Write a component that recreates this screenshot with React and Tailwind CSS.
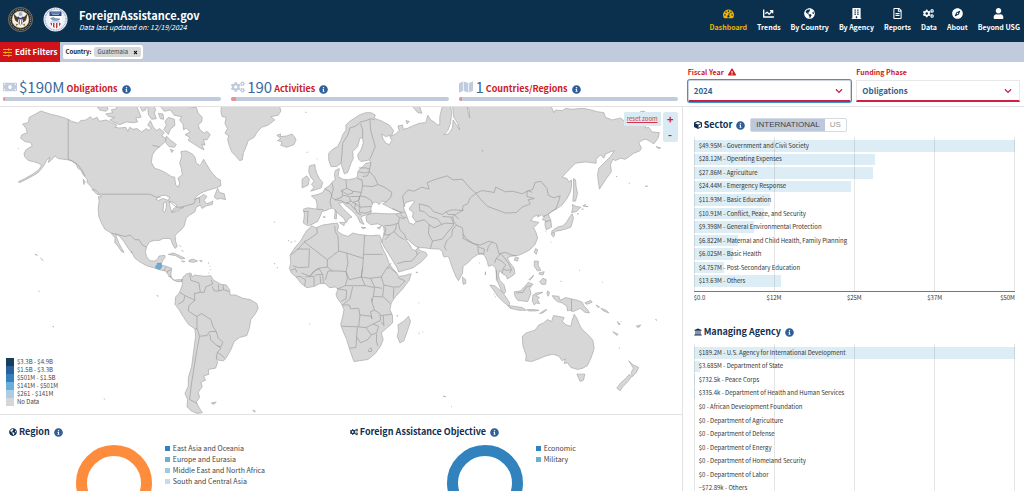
import React from "react";
import {
  FaChartLine, FaGlobeAmericas, FaBuilding, FaRegFileAlt, FaCogs, FaCompass, FaUser,
  FaInfoCircle, FaMoneyBill, FaMap, FaCube, FaUniversity, FaExclamationTriangle, FaTimes, FaChevronDown,
} from "react-icons/fa";

function GaugeIcon({ className }) {
  return (
    <svg viewBox="0 0 28 28" className={className} fill="currentColor" aria-hidden="true">
      <path d="M14 4a14 14 0 0 0-12 21q.4 1 1.500 1h21q1 0 1.500-1A14 14 0 0 0 14 4z" />
      <g fill="#0b304e">
        <circle cx="5" cy="18" r="2" />
        <circle cx="7.500" cy="11" r="2" />
        <circle cx="14" cy="8" r="2" />
        <circle cx="20.500" cy="11" r="2" />
        <circle cx="23" cy="18" r="2" />
        <path d="M15 12l2 .500-1.500 6.500a3 3 0 1 1-2-.500z" />
      </g>
    </svg>
  );
}

const NAV = [
  ["Dashboard", GaugeIcon], ["Trends", FaChartLine], ["By Country", FaGlobeAmericas], ["By Agency", FaBuilding],
  ["Reports", FaRegFileAlt], ["Data", FaCogs], ["About", FaCompass], ["Beyond USG", FaUser],
];

const STATS = [
  { icon: FaMoneyBill, value: "$190M", label: "Obligations", share: 1 },
  { icon: FaCogs, value: "190", label: "Activities", share: 2 },
  { icon: FaMap, value: "1", label: "Countries/Regions", share: 1 },
];

const SECTORS = [
  ["$49.95M", "Government and Civil Society", 100], ["$28.12M", "Operating Expenses", 56.3],
  ["$27.86M", "Agriculture", 55.8], ["$24.44M", "Emergency Response", 48.9], ["$11.93M", "Basic Education", 23.9],
  ["$10.91M", "Conflict, Peace, and Security", 21.8], ["$9.398M", "General Environmental Protection", 18.8],
  ["$6.822M", "Maternal and Child Health, Family Planning", 13.7], ["$6.025M", "Basic Health", 12.1],
  ["$4.757M", "Post-Secondary Education", 9.5], ["$13.63M", "Others", 27.3],
];

const AGENCIES = [
  ["$189.2M", "U.S. Agency for International Development", 100], ["$3.685M", "Department of State", 1.95],
  ["$732.5k", "Peace Corps", 0.4], ["$335.4k", "Department of Health and Human Services", 0.2],
  ["$0", "African Development Foundation", 0], ["$0", "Department of Agriculture", 0],
  ["$0", "Department of Defense", 0], ["$0", "Department of Energy", 0], ["$0", "Department of Homeland Security", 0],
  ["$0", "Department of Labor", 0], ["−$72.89k", "Others", 0],
];

const LEGEND = [
  ["bg-[#143d5e]", "$3.3B - $4.9B"], ["bg-[#2a5f9e]", "$1.5B - $3.3B"], ["bg-[#3182bd]", "$501M - $1.5B"],
  ["bg-[#6baed6]", "$141M - $501M"], ["bg-[#abcde6]", "$261 - $141M"], ["bg-[#d6d6d6]", "No Data"],
];

/* ---- World map. Every outline is a list of [dx, dy, points] sections, joined in order. ---- */
const A = [0, 300], B = [600, 300], C = [1320, 300], D = [0, 750], E = [810, 600], F = [1320, 750];

function trace(sections, closed) {
  const pts = sections.flatMap(([[dx, dy], list]) =>
    list.trim().split(/\s+/).map((p) => {
      const [x, y] = p.split(",").map(Number);
      return `${x + dx} ${y + dy}`;
    })
  );
  return "M" + pts.join("L") + (closed ? "Z" : "");
}

const LAND = [
  // North and Central America
  [[A, "68,72 85,68 88,52 105,43 123,33 150,42 175,48 195,54 205,58 215,64 235,70 242,62 258,60 272,50 278,58 292,52 298,64 320,60 335,68 352,76 345,82 360,84 378,82 384,94 390,82 400,88 412,86 425,96 440,86 448,92 455,84 444,76 452,62 460,80 470,92 480,86 494,98 486,108 500,116 494,128 478,142 468,150 458,165 455,188 465,205 485,212 500,220 515,230 525,232 528,255 536,262 540,250 535,235 548,225 545,205 540,190 546,170 544,155 560,153 578,162 586,172 590,190 600,196 606,190 612,178 622,195 632,212 640,222 652,235 662,240 664,258 650,264 630,270 612,276 600,282 590,290 584,300 600,292 612,284 622,290 613,302 622,312 640,304 638,314 620,318 608,326 602,316 590,322 586,336 570,346 560,355 556,370 553,380 545,390 535,398 526,408 528,425 533,440 526,446 518,432 514,418 505,416 490,416 480,422 465,422 450,426 441,440"],
    [D, "437,5 440,20 450,33 465,34 474,28 478,19 495,17 496,23 488,34 484,46 500,50 516,56 514,70 514,82 522,92 534,90 548,90 545,96 532,96 518,88 508,78 498,64 480,60 462,54 440,48 418,35 405,25 395,5"],
    [A, "396,460 385,445 372,425 360,410 348,402 350,412 358,432 366,446 373,458 366,456 355,440 345,428 346,415 334,400 315,388 305,370 297,350 295,325 298,305 296,290 305,292 300,285 285,272 275,262 262,248 262,238 250,225 244,212 234,205 228,192 215,183 205,180 190,178 175,176 165,168 155,180 145,188 150,172 140,182 130,200 115,218 90,233 60,248 55,246 75,236 100,222 118,208 125,196 115,190 100,185 85,182 75,172 72,160 80,148 97,138 92,128 75,125 62,115 65,105 82,98 78,85"]],
  // Arctic archipelago
  [[A, "292,20 300,30 318,34 325,28 322,20"]],
  [[A, "318,42 340,38 334,30 350,26 352,18 410,18 418,35 424,52 408,54 414,66 398,68 380,66 360,74 340,66 330,60 345,52 326,50"]],
  [[A, "420,18 440,18 438,30 428,34"]],
  [[A, "444,20 462,18 468,28 464,40 470,56 456,58 446,44"]],
  [[A, "478,15 560,15 570,24 590,22 596,40 608,52 606,66 596,74 600,88 614,100 622,94 632,104 622,120 612,118 616,136 606,132 613,150 598,142 580,130 566,122 570,112 556,104 572,96 560,84 552,90 550,72 540,60 546,50 524,46 512,30 494,34"]],
  [[A, "476,40 490,42 492,58 482,56"]],
  [[A, "506,52 524,58 526,76 512,88 506,104 492,88 500,76 496,64"]],
  [[A, "500,108 512,120 530,134 524,142 508,140 498,128"]],
  [[A, "512,148 522,152 516,158"]],
  [[A, "644,292 650,276 654,265 660,278 674,282 678,300 664,296 652,298"]],
  [[A, "250,238 256,246 252,254"]],
  [[A, "276,268 290,272 300,284 292,284"]],
  // Greenland, Iceland, Svalbard
  [[B, "66,15 240,15 244,34 236,46 214,50 226,60 205,76 186,82 172,98 164,112 146,122 140,140 132,158 128,180 120,182 110,170 98,158 90,140 84,118 88,108 76,100 84,86 76,70 80,52 68,50 64,36"]],
  [[B, "232,106 244,102 242,110 262,108 278,102 290,118 284,134 262,142 244,136 248,126 234,122 244,116"]],
  // Caribbean
  [[D, "506,14 522,10 540,18 556,26 546,28 528,18"]],
  [[D, "568,32 580,28 594,34 582,38 568,36"]], [[D, "546,34 556,35 550,37"]], [[D, "600,33 608,33 606,36"]],
  // South America
  [[D, "548,88 552,80 562,72 574,70 578,82 584,76 600,78 616,80 634,78 640,90 650,96 664,104 680,106 690,120 692,136 708,136 730,146 752,150 772,162 776,176 768,192 754,210 750,234 742,258 720,264 704,276 694,300 682,322 672,334 656,332 650,322 654,340 648,356 626,360 628,374 612,380 618,392 604,398 608,412 596,428 600,444 590,458 596,470 604,484 608,490 592,492 574,484 562,472 564,450 556,432 566,410 566,384 576,352 582,306 588,260 586,238 566,224 550,200 538,180 526,164 528,142 540,128 548,106"]],
  [[D, "636,460 650,458 644,464 638,464"]], [[D, "760,482 768,486 764,488"]],
  // Eurasia
  [[B, "440,75 450,65 465,55 480,45 500,38 515,38 528,45 525,55 545,62 570,75 583,92 578,105 560,110 546,102 552,118 560,130 570,134 578,122 572,110 590,102 600,92 596,78 610,75 612,88 625,85 640,78 660,70 680,68 686,46 695,60 705,66 714,74 722,75 722,50 728,25 734,15"],
    [C, "335,15 345,38 350,30 370,32 380,25 400,28 430,25 450,28 475,35 495,38 500,52 520,60 545,54 560,66 580,60 600,72 606,34 618,34 620,84 630,82 640,96 662,98 658,115 645,132 635,125 622,118 612,120 600,128 608,145 603,153 585,160 560,178 545,175 530,182 522,178 515,195 518,215 500,240 482,268 480,255 476,225 480,205 495,190 515,170 527,152 515,156 500,162 495,175 485,165 472,178 472,190 455,188 440,186 410,190 395,205 380,220 370,232 384,236 390,246 398,240 398,258 395,275 385,295 370,315 352,328 338,334 328,345 336,362 338,382 322,390 318,375 320,362 310,360 318,350 308,345 296,352 300,345 285,350 275,362 290,366 300,368 284,384 292,400 296,415 288,435 270,452 250,462 235,468"],
    [F, "232,18 215,20 205,25 212,38 225,55 228,72 218,80 205,88 202,78 190,72 183,62 178,75 182,92 195,105 200,125 196,132 186,120 180,105 172,90 172,75 170,55 160,46 148,50 145,35 138,20 130,12 115,15 100,25 88,38 72,50 70,72 58,93 50,80 38,50 30,25 25,20 15,22"],
    [E, "522,168 520,155 510,148 485,147 465,144 452,144 440,140 425,128 415,118 412,122 422,136 430,150 440,152 447,142 450,152 470,158 474,168 455,188 430,205 405,212 388,217 384,205 372,185 360,165 345,142 338,128 342,110 345,95 343,80 325,72 305,75 292,65"],
    [B, "500,352 506,344 525,340 560,342 590,342 608,340 585,330 565,320 550,312 562,306 548,304 540,314 530,306 520,310 515,325 516,340 500,346 490,348 485,355 494,374 482,368 475,352 465,340 455,330 440,318 430,308 418,310 430,325 445,340 458,352 448,356 440,370 434,356 415,340 402,326 395,325 380,332 368,335 362,350 355,365 335,375 325,378 312,370 315,345 312,328 325,324 352,328 353,315 350,300 336,288 355,284 370,278 378,265 390,258 400,245 408,240 405,225 408,212 420,206 416,230 430,238 445,240 465,236 474,232 476,214 490,200 500,190 515,188 510,180 485,185 478,178 475,165 485,150 492,130 490,115 482,114 475,140 460,155 462,175 455,190 450,205 445,218 435,222 428,200 425,190 412,200 395,200 388,180 388,160 400,148 415,140 425,120 430,105 440,90"]],
  // Europe: islands
  [[B, "330,198 346,194 348,206 352,220 360,236 370,248 366,264 348,270 334,274 344,262 336,254 344,244 334,232 328,216"]],
  [[B, "308,238 322,228 330,238 326,256 308,264"]],
  [[B, "408,330 412,338 411,358 405,356"]], [[B, "420,368 436,368 434,378"]], [[B, "486,382 500,384 490,387"]], [[B, "534,384 546,380 540,388"]],
  [[B, "636,15 660,15 668,40 656,38"]], [[B, "620,62 630,64 624,72"]], [[B, "372,350 378,352 374,354"]],
  // Africa
  [[E, "126,78 140,84 160,76 185,72 204,70 208,80 204,94 218,104 236,110 250,100 268,104 286,106 304,108 326,106 332,108 338,124 334,132 342,150 352,170 360,192 370,206 384,222 388,230 404,228 426,222 420,242 400,268 378,292 366,310 362,330 370,348 370,370 352,386 336,400 342,420 334,440 318,462 296,480 270,484 254,486 248,470 240,446 232,420 220,392 214,374 220,352 224,330 216,312 204,296 200,284 206,268 198,262 180,264 168,252 150,252 136,260 112,264 96,252 80,232 66,220 60,206 64,190 62,166 76,144 92,126 100,112 112,92 122,84"]],
  [[E, "386,376 402,366 418,350 424,366 414,396 404,424 392,430 384,410 388,394"]],
  // Asia and Oceania: islands
  [[E, "580,232 590,240 590,252 582,254"]],
  [[C, "404,236 410,240 412,262 416,280 410,304 402,304 404,280"]],
  [[C, "398,338 402,324 400,314 412,320 426,322 412,336"]],
  [[C, "400,342 404,356 396,382 380,388 364,392 352,394 344,400 338,394 356,382 372,378 384,366 392,352"]],
  [[C, "338,398 348,402 344,412 338,406"]], [[C, "290,446 296,450 292,464 286,458"]],
  [[C, "432,318 440,314 438,320"]], [[C, "652,140 666,144 660,146"]],
  [[F, "228,24 238,24 236,34 226,32"]],
  [[F, "286,34 298,34 298,48 306,62 296,64 286,50"]], [[F, "300,70 316,66 312,76 302,74"]],
  [[F, "302,96 312,86 322,90 320,104 308,104"]], [[F, "270,90 284,76 280,84 272,92"]],
  [[F, "152,106 166,108 186,124 202,144 212,160 210,170 194,158 176,140 164,122"]],
  [[F, "206,168 226,170 250,174 262,182 240,182 214,176"]],
  [[F, "226,126 244,124 258,110 268,98 282,104 272,116 276,132 266,156 236,152 228,140"]],
  [[F, "282,136 292,130 312,128 290,138 302,144 296,150 302,162 292,160 286,166 280,154"]],
  [[F, "264,180 280,180 300,182 290,184 268,184"]], [[F, "302,192 316,182 324,180 312,190"]], [[F, "326,124 332,128 328,140 324,132"]],
  [[F, "340,138 360,140 364,152 380,144 398,148 416,152 430,158 436,170 446,180 452,190 438,188 424,176 412,182 402,186 392,182 386,184 384,170 370,160 356,156 346,148"]],
  [[F, "438,160 456,152 460,158 444,164"]], [[F, "472,166 482,172 478,174"]], [[F, "486,176 502,182 510,190 494,184"]],
  [[F, "536,216 544,224 540,226"]], [[F, "522,246 538,254 534,258"]], [[F, "592,230 606,226 600,234"]],
  [[F, "250,260 262,250 288,242 300,226 314,220 326,210 338,216 344,198 358,200 376,204 370,216 382,226 396,230 400,212 406,194 414,206 422,226 430,240 446,254 462,272 466,296 458,322 446,348 432,356 416,360 396,354 386,340 376,342 380,328 370,334 360,320 342,314 318,320 300,328 278,336 260,334 262,318 252,290"]],
  [[F, "414,374 438,374 434,392 424,396"]],
  [[F, "570,334 580,344 600,354 592,370 580,382 578,368 584,356"]],
  [[F, "572,374 578,382 566,398 552,412 544,424 534,416 546,400 562,386"]],
];

const WATER = [
  [[B, "620,308 640,302 646,306 636,318 630,328 642,338 640,352 650,366 644,374 630,370 624,352 618,336 612,322"]],
  [[C, "34,15 38,40 34,70 26,92 14,104 28,102 40,84 42,60 52,74 62,90 56,70 44,52 40,15"]],
  [[C, "84,20 88,40 92,54 90,30"]],
  [[A, "468,298 482,288 496,286 510,292 506,302 490,296 476,302"]],
  [[A, "492,310 500,306 500,322 496,338 490,334"]],
  [[A, "508,304 520,308 528,312 532,322 522,326 516,336 512,324"]],
  [[A, "516,338 530,330 552,322 540,330 526,336"]],
];

const BORDERS = [
  [[A, "205,58 205,178 218,184 232,192 246,210 256,228"]],
  [[A, "302,283 450,283 470,292 484,292"]], [[A, "508,304 530,322 545,322 566,316 582,312 590,296 600,294 600,310"]],
  [[A, "334,400 352,404 376,410 392,406 406,420 418,420 428,436 440,442"]], [[A, "458,136 480,141"]],
  [[D, "484,48 480,60"]], [[D, "500,52 492,64"]], [[D, "516,58 500,68"]], [[D, "548,88 545,96"]], [[D, "506,80 516,82"]],
  [[D, "570,74 574,92 598,100 602,128 614,128 618,112 640,102 634,90"]],
  [[D, "540,128 556,138 552,154 536,164"]], [[D, "556,138 586,152 584,132 602,128"]],
  [[D, "586,152 568,168 566,184 584,196 592,200 606,192 634,210 640,230 650,246 656,266 670,278 664,292 652,288"]],
  [[D, "592,200 592,236 586,240"]], [[D, "592,236 600,260 622,258 630,246 650,246"]],
  [[D, "630,254 634,272 652,288 664,296 654,308 676,326"]], [[D, "654,308 650,324"]],
  [[D, "600,260 592,300 584,350 576,400 570,450 592,462"]], [[D, "638,110 644,124 658,124 656,104"]], [[D, "658,124 672,120 670,106"]], [[D, "672,120 690,126"]],
  [[B, "425,190 428,160 430,130 446,104 452,84 470,78 484,66 500,62 516,56 526,60"]],
  [[B, "484,70 490,90 490,114"]], [[B, "512,58 514,90 528,140 512,178"]],
  [[B, "515,188 510,214 498,220 478,216"]], [[B, "478,204 500,204 512,208"]], [[B, "510,214 526,232 536,254 520,260 490,258 488,240 474,236"]],
  [[B, "490,230 504,228 510,216"]], [[B, "440,240 442,266 460,274 486,278 490,258"]],
  [[B, "536,254 556,262 578,278 574,294 562,304"]], [[B, "486,278 482,288 500,292 516,302 520,312"]],
  [[B, "398,250 402,268 396,290 406,300 428,292 430,282 426,272 442,266"]], [[B, "376,266 392,276 398,288"]], [[B, "396,290 392,306 396,322"]],
  [[B, "406,300 424,302 440,310 454,304 450,290 430,286"]], [[B, "426,272 444,284 460,280 460,274"]],
  [[B, "454,290 482,290 478,302 460,308 452,300"]], [[B, "440,310 452,312 468,330"]], [[B, "460,308 474,316 482,322 516,320"]],
  [[B, "482,322 480,338 500,340 516,334"]], [[B, "470,310 466,322 474,340 486,346"]], [[B, "482,288 478,302 482,322"]],
  [[B, "352,328 372,330"]], [[B, "326,336 324,372"]], [[B, "312,336 328,334"]],
  [[B, "580,326 600,336 616,338"]], [[B, "590,342 598,352 616,358"]], [[B, "604,344 612,352 622,354"]],
  [[B, "556,378 578,376 598,370 600,356"]], [[B, "554,380 560,386 556,406 572,404 588,392 592,374"]],
  [[B, "572,404 558,420"]], [[B, "598,370 602,390 616,404 622,420"]], [[B, "584,396 602,412 616,420"]],
  [[B, "616,322 610,290 626,270 644,274 668,262 690,268 684,248 710,238 744,228 762,240 790,238"], [C, "90,262 110,280"]],
  [[C, "110,280 130,272 166,278 170,262 200,276 220,274 250,282 268,272 280,278"]],
  [[C, "110,280 126,300 146,320 200,340 232,338 250,322 274,312 268,300 286,296 264,290 264,276 282,268 288,248 306,244 324,266 328,286 344,294 364,288 358,308 350,328 326,344 310,352"]],
  [[C, "110,280 92,296 86,312 72,318 70,332 40,350 44,366 52,376 70,384 72,402 80,416 104,432 124,436 150,424 172,432 180,462 200,458 216,466 232,468"]],
  [[B, "662,332 660,312 690,320 704,336 730,344 740,336 760,330 794,332"]],
  [[B, "650,366 676,360 690,374 704,384 728,374 716,358 690,350 676,336 660,332"]],
  [[B, "728,374 740,370 764,372 756,352 730,350"]], [[B, "740,336 748,344 764,344 780,358"]], [[B, "690,374 688,402 700,424 694,446"]],
  [[B, "700,424 730,418 742,402 760,380 764,372"]], [[C, "52,376 40,390 38,408 22,424 16,442 22,452"]],
  [[C, "72,402 72,416 90,426 118,438"]], [[C, "116,438 118,460 134,464 136,448 118,442"]], [[C, "144,456 148,440 160,426"]],
  [[F, "166,40 172,26 184,12"]], [[F, "184,12 196,24 208,40 218,60 212,70"]], [[F, "172,26 190,36 200,46 192,58 204,62 216,60"]], [[F, "192,58 190,70"]], [[F, "172,62 174,90"]],
  [[C, "318,366 334,362"]], [[F, "398,148 398,184"]], [[F, "232,130 252,128 262,112 276,108"]],
  [[E, "384,192 404,186 428,184 440,170 450,158"]], [[E, "440,152 444,164"]],
  [[E, "142,84 144,100 120,118 104,126"]], [[E, "106,126 86,148 64,166"]], [[E, "104,126 174,180 208,154 206,110 198,96 196,78"]],
  [[E, "120,146 118,202 88,204 70,198"]], [[E, "84,148 118,148"]], [[E, "174,180 174,202 146,206 130,218 122,230 96,220"]], [[E, "208,154 232,160 282,176 286,106"]],
  [[E, "284,164 340,164"]], [[E, "232,160 236,190 230,216 214,214 176,214 168,240"]], [[E, "174,202 190,214"]], [[E, "282,176 280,204 276,232 240,240 230,216"]],
  [[E, "280,204 276,232 300,236 336,232 352,206 366,190"]], [[E, "352,206 362,204 384,222"]], [[E, "336,232 344,256 370,262 390,262 408,244 386,234"]],
  [[E, "344,256 340,290 364,312"]], [[E, "374,264 372,296"]], [[E, "304,236 316,262 338,266"]], [[E, "276,232 288,258 316,264 312,290 340,292"]],
  [[E, "204,268 228,258 288,258"]], [[E, "230,216 234,236 228,258"]], [[E, "206,268 232,272 230,298 216,304"]], [[E, "250,262 242,298 222,314"]],
  [[E, "218,316 240,316 244,328 268,326 272,346 306,350 308,358 304,336 316,332 308,308 312,290"]], [[E, "308,308 306,296"]],
  [[E, "216,380 268,382 290,384 310,374 334,362 332,342 316,332"]], [[E, "272,346 268,382"]], [[E, "334,348 368,344"]], [[E, "342,348 344,378 336,366"]],
  [[E, "264,384 262,412 260,444 240,446"]], [[E, "262,412 274,430 296,420 306,406 290,384"]], [[E, "306,406 322,400 328,380 312,374"]], [[E, "322,402 322,428 326,440"]],
  [[E, "300,446 308,448 306,456 298,456 298,450"]], [[E, "64,212 78,206 82,218"]], [[E, "80,232 92,230 108,240 106,260"]], [[E, "108,232 134,230 134,258"]],
  [[E, "136,226 160,224 162,250"]], [[E, "152,228 154,250"]], [[E, "122,230 138,212 150,208 160,224"]],
];

const SPECKS = "M312 1198l3 1M54 446h2M105 764l8 3M122 775l8 8M116 875h3M158 981l4 1M471 887l5 3M918 337h3M922 457h3M952 477h2M823 667h3M866 723h3M874 727h4M885 724h3M824 792h3M832 804h3M930 974h2M1192 948l5 2M1250 818h6M1258 910h2M1258 1001h3M1270 997h2M1852 530h3M1890 550h3M1939 559h8M1656 726l2 2M1640 695h2M1459 816v10M1685 845h3M1741 812h2M1810 848h2M1866 966h2M1970 960l5 2M1332 1190l8 2M1356 1222h2M1860 1046h3M1448 450l3 5M1484 885h2M1488 892h2M1440 790h2M625 790h3M630 800h2M632 810h2M627 820h2M540 737l4 4M546 752l5 3M1532 924h3M1760 620h8M1748 628h6M1735 642h5";

function WorldMap() {
  return (
    <svg viewBox="0 321 2049 924" className="block w-full" role="img" aria-label="World map of obligations">
      <g stroke="#a6a6a6" strokeWidth="2" strokeLinejoin="round">
        <g fill="#d7d7d7">{LAND.map((s, i) => <path key={i} d={trace(s, true)} />)}</g>
        <g fill="#fff">{WATER.map((s, i) => <path key={i} d={trace(s, true)} />)}</g>
        <g fill="none" stroke="#9a9a9a">{BORDERS.map((s, i) => <path key={i} d={trace(s, false)} />)}</g>
        <path d={SPECKS} fill="none" stroke="#a8a8a8" strokeWidth="3" />
        <path d="M472 791h12l1 10h2l-8 8-11-4 2-9h6z" fill="#6baed6" stroke="#5b93c4" />
      </g>
    </svg>
  );
}

function Info() {
  return (
    <button type="button" aria-label="More information" className="text-[#2f5f9a]">
      <FaInfoCircle className="size-[9px]" />
    </button>
  );
}

function Heading({ icon: Icon, children }) {
  return (
    <div className="flex items-center gap-1 text-[#112e51]">
      <h2 className="flex items-center gap-[2px] text-[9px] leading-4 font-bold whitespace-nowrap">
        <Icon className="size-2" />
        {children}
      </h2>
      <Info />
    </div>
  );
}

function StateSeal() {
  return (
    <svg viewBox="0 0 50 50" className="size-[25px]" role="img" aria-label="Department of State">
      <circle cx="25" cy="25" r="24" fill="#252a33" stroke="#a08b60" strokeWidth="1.5" />
      <circle cx="25" cy="25" r="20.5" fill="none" stroke="#d7cfb8" strokeWidth="2" strokeDasharray="1.5 2" />
      <circle cx="25" cy="25" r="17" fill="#f4f2e8" stroke="#c9a95f" />
      <path d="M12 14q-1 14 9 17l4-5 4 5q10-3 9-17l-6 6-3-1-4 5-4-5-3 1z" fill="#4d3f2e" />
      <path d="M20 22h10v8q-2 5-5 6-3-1-5-6z" fill="#fff" stroke="#9a3a3a" />
      <path d="M20 22h10v3H20z" fill="#2b4a82" />
      <path d="M23 26v8M27 26v8" stroke="#b03838" strokeWidth="1.5" />
      <circle cx="25" cy="14" r="4" fill="#9fb3c9" />
      <path d="M15 33l6 2-4 3zM35 33l-6 2 4 3z" fill="#75864b" />
    </svg>
  );
}

function AidSeal() {
  return (
    <svg viewBox="0 0 50 50" className="size-[25px]" role="img" aria-label="USAID">
      <circle cx="25" cy="25" r="24" fill="#eef2f8" />
      <circle cx="25" cy="25" r="21" fill="none" stroke="#8ea3c6" strokeWidth="3" strokeDasharray="1.5 1.8" />
      <path d="M13 9h24v23q-3 9-12 13-9-4-12-13z" fill="#fff" />
      <path d="M13 9h24v9H13z" fill="#284c8b" />
      <path d="M16 12h18M18 15h14" stroke="#dce5f3" strokeWidth="1.2" />
      <path d="M15 23q6-4 10 0l9 1q-4 4-9 3-6 1-10-4zM15 30h19" stroke="#50719f" fill="#8aa5c8" />
      <path d="M14 32h22q-3 9-11 12-8-3-11-12z" fill="#fff" />
      <path d="M15 32h3v6l-3-4zM20 32h3v10l-3-2zM26 32h3v9l-3 2zM32 32h3v3l-3 4z" fill="#c8323d" />
    </svg>
  );
}

function FilterIcon() {
  return (
    <svg viewBox="0 0 24 24" className="size-[9px]" fill="none" stroke="#f5b400" strokeWidth="3" aria-hidden="true">
      <path d="M0 4h24M0 12h24M0 20h24M15 1v6M6 9v6M15 17v6" />
    </svg>
  );
}

function BarChart({ rows }) {
  return (
    <div className="relative pt-[2px] pb-[3px]">
      <div className="flex h-[149px] flex-col">
        {rows.map(([value, name, share]) => (
          <div key={name} className="relative flex flex-1 items-center">
            <div className="absolute inset-y-px left-0 bg-[#ddedf5]" style={{ width: `${share}%` }} />
            <span className="relative pl-[5px] text-[6px] leading-3 whitespace-nowrap text-[#333]">{value} - {name}</span>
          </div>
        ))}
      </div>
      <div className="pointer-events-none absolute inset-0 grid grid-cols-4 border-l border-black/10">
        {[0, 1, 2, 3].map((i) => <div key={i} className="border-r border-black/10" />)}
      </div>
    </div>
  );
}

function Dropdown({ id, label, warn, value, options, active }) {
  return (
    <div>
      <label htmlFor={id} className="flex items-center gap-1 text-[7px] leading-3 font-bold text-[#cd2026]">
        {label}
        {warn && <FaExclamationTriangle className="size-2" />}
      </label>
      <div className="relative mt-[2px]">
        <select
          id={id}
          defaultValue={value}
          className={
            active
              ? "block h-[22px] w-full appearance-none rounded-[2px] border border-b-2 border-[#cfd3da] border-b-[#cd2044] bg-white px-[5px] text-[8px] font-bold text-[#2e5f92] ring-1 ring-[#3e94cf] outline-none"
              : "block h-[22px] w-full appearance-none border border-b-2 border-[#e8e8e8] border-b-[#cd2044] bg-white px-[5px] text-[8px] font-bold text-[#2e5f92] outline-none"
          }
        >
          {options.map((o) => <option key={o}>{o}</option>)}
        </select>
        <FaChevronDown className="pointer-events-none absolute top-[7px] right-2 size-2 text-[#cd2044]" />
      </div>
    </div>
  );
}

function Donut({ color, items, label }) {
  return (
    <div className="flex items-start justify-center gap-[13px]">
      <svg viewBox="0 0 76 76" className="mt-[2px] size-[76px]" role="img" aria-label={label}>
        <circle cx="38" cy="38" r="32.5" fill="none" stroke={color} strokeWidth="11" />
      </svg>
      <ul className="text-[7px] leading-[11px] text-[#444]">
        {items.map(([swatch, name]) => (
          <li key={name} className="flex items-center gap-[3px] whitespace-nowrap">
            <span className={`size-[5px] ${swatch}`} />
            {name}
          </li>
        ))}
      </ul>
    </div>
  );
}

export default function App() {
  return (
    <div className="h-screen overflow-hidden bg-white font-['Noto_Sans_CJK_SC','Noto_Sans',sans-serif]">
      <header className="flex h-[42px] items-center justify-between bg-[#0b304e] pr-1 pl-2 text-white">
        <div className="flex items-center">
          <div className="flex gap-[10px] pb-1">
            <StateSeal />
            <AidSeal />
          </div>
          <div className="pb-[3px] pl-[11px]">
            <h1 className="text-[11px] leading-[14px] font-bold">ForeignAssistance.gov</h1>
            <p className="text-[7px] leading-[10px] italic">Data last updated on: 12/19/2024</p>
          </div>
        </div>
        <nav className="flex gap-[10px] pb-[3px]">
          {NAV.map(([name, Icon], i) => (
            <a
              key={name}
              href="#"
              aria-current={i === 0 ? "page" : undefined}
              className={i === 0 ? "flex flex-col items-center gap-[3px] text-[#f0b400]" : "flex flex-col items-center gap-[3px]"}
            >
              <Icon className="size-[11px]" />
              <span className="text-[7px] leading-[10px] font-bold whitespace-nowrap">{name}</span>
            </a>
          ))}
        </nav>
      </header>

      <div className="flex h-5 items-stretch bg-[#c1cbde]">
        <button type="button" className="flex items-center gap-[3px] bg-[#d01319] px-[3px] text-[8px] font-bold text-white">
          <FilterIcon />
          Edit Filters
        </button>
        <div className="my-[3px] ml-[3px] flex items-center gap-[3px] rounded-[2px] bg-white px-[2px] text-[6px] leading-[10px]">
          <span className="font-bold text-[#222]">Country:</span>
          <button type="button" aria-label="Remove Guatemala" className="flex items-center gap-[5px] rounded-[2px] bg-[#d8d8d8] px-[3px] text-[#444]">
            Guatemala
            <FaTimes className="size-[5px] text-black" />
          </button>
        </div>
      </div>

      <div className="grid grid-cols-[2fr_1fr]">
        <section className="grid h-[45px] grid-cols-3 gap-[10px] border-b border-[#e2e2e2] pt-4 pr-[5px] pl-[3px]">
          {STATS.map(({ icon: Icon, value, label, share }) => (
            <div key={label}>
              <div className="flex h-[18px] items-center gap-[2px] whitespace-nowrap">
                <Icon className="size-[14px] text-[#c1cbde]" />
                <span className="text-[15px] leading-[18px] text-[#3a6a9c]">{value}</span>
                <span className="pt-1 text-[9px] leading-3 font-bold text-[#cd2026]">{label}</span>
                <span className="flex pt-1 pl-[2px]"><Info /></span>
              </div>
              <div className="mt-px h-1 overflow-hidden rounded-[2px] bg-[#c1cbde]">
                <div className="h-full bg-[#ee8f92]" style={{ width: `${share}%` }} />
              </div>
            </div>
          ))}
        </section>

        <section className="grid h-[45px] grid-cols-2 gap-[5px] border-b border-[#e2e2e2] pt-1 pr-1 pl-[5px]">
          <Dropdown id="year" label="Fiscal Year" warn active value="2024" options={["2024", "2023", "2022"]} />
          <Dropdown id="phase" label="Funding Phase" value="Obligations" options={["Obligations", "Disbursements"]} />
        </section>

        <main className="min-w-0 border-r border-[#e2e2e2]">
          <div className="relative border-b border-[#e2e2e2]">
            <WorldMap />
            <div className="absolute top-[5px] right-1 flex items-start gap-[2px]">
              <button type="button" className="rounded-[1px] bg-[#d9eaf3] px-[3px] py-px text-[6px] leading-3 text-[#d3364c] underline">reset zoom</button>
              <div className="flex flex-col overflow-hidden rounded-[2px]">
                <button type="button" aria-label="Zoom in" className="h-[15px] w-[15px] bg-[#d9eaf3] text-[11px] leading-[15px] font-bold text-[#cd2026]">+</button>
                <button type="button" aria-label="Zoom out" className="h-[15px] w-[15px] bg-[#d9eaf3] text-[11px] leading-[15px] font-bold text-[#cd2026]">-</button>
              </div>
            </div>
            <ul className="absolute bottom-2 left-[6px] text-[6px] leading-2 text-[#444]">
              {LEGEND.map(([swatch, name]) => (
                <li key={name} className="flex items-center gap-[3px]">
                  <span className={`size-2 ${swatch}`} />
                  {name}
                </li>
              ))}
            </ul>
          </div>
          <div className="grid grid-cols-2 pt-[9px]">
            <section>
              <div className="pb-[3px] pl-[9px]"><Heading icon={FaGlobeAmericas}>Region</Heading></div>
              <Donut
                label="Obligations by region"
                color="#fd8d3c"
                items={[["bg-[#3182bd]", "East Asia and Oceania"], ["bg-[#6baed6]", "Europe and Eurasia"], ["bg-[#9ecae1]", "Middle East and North Africa"], ["bg-[#c6dbef]", "South and Central Asia"]]}
              />
            </section>
            <section>
              <div className="pb-[3px] pl-[9px]"><Heading icon={FaCogs}>Foreign Assistance Objective</Heading></div>
              <Donut label="Obligations by objective" color="#3182bd" items={[["bg-[#3182bd]", "Economic"], ["bg-[#6baed6]", "Military"]]} />
            </section>
          </div>
        </main>

        <aside className="min-w-0 pt-[10px] pr-[9px] pl-[11px]">
          <section>
            <div className="flex items-center gap-[5px]">
              <Heading icon={FaCube}>Sector</Heading>
              <div className="flex h-[14px] rounded-[2px] border border-[#d5d9e0] font-['Liberation_Sans',sans-serif] text-[8px] leading-3">
                <button type="button" aria-pressed="true" className="bg-[#bcc9dd] px-[5px] text-[#444]">INTERNATIONAL</button>
                <button type="button" aria-pressed="false" className="px-[5px] text-[#999]">US</button>
              </div>
            </div>
            <div className="mt-1">
              <BarChart rows={SECTORS} />
              <div className="grid grid-cols-8 border-t border-[#777] text-[6px] leading-[11px] text-[#333]">
                <span>$0.0</span>
                <span className="col-span-2 text-center">$12M</span>
                <span className="col-span-2 text-center">$25M</span>
                <span className="col-span-2 text-center">$37M</span>
                <span className="text-right">$50M</span>
              </div>
            </div>
          </section>
          <section className="mt-[21px]">
            <Heading icon={FaUniversity}>Managing Agency</Heading>
            <div className="mt-1"><BarChart rows={AGENCIES} /></div>
          </section>
        </aside>
      </div>
    </div>
  );
}
